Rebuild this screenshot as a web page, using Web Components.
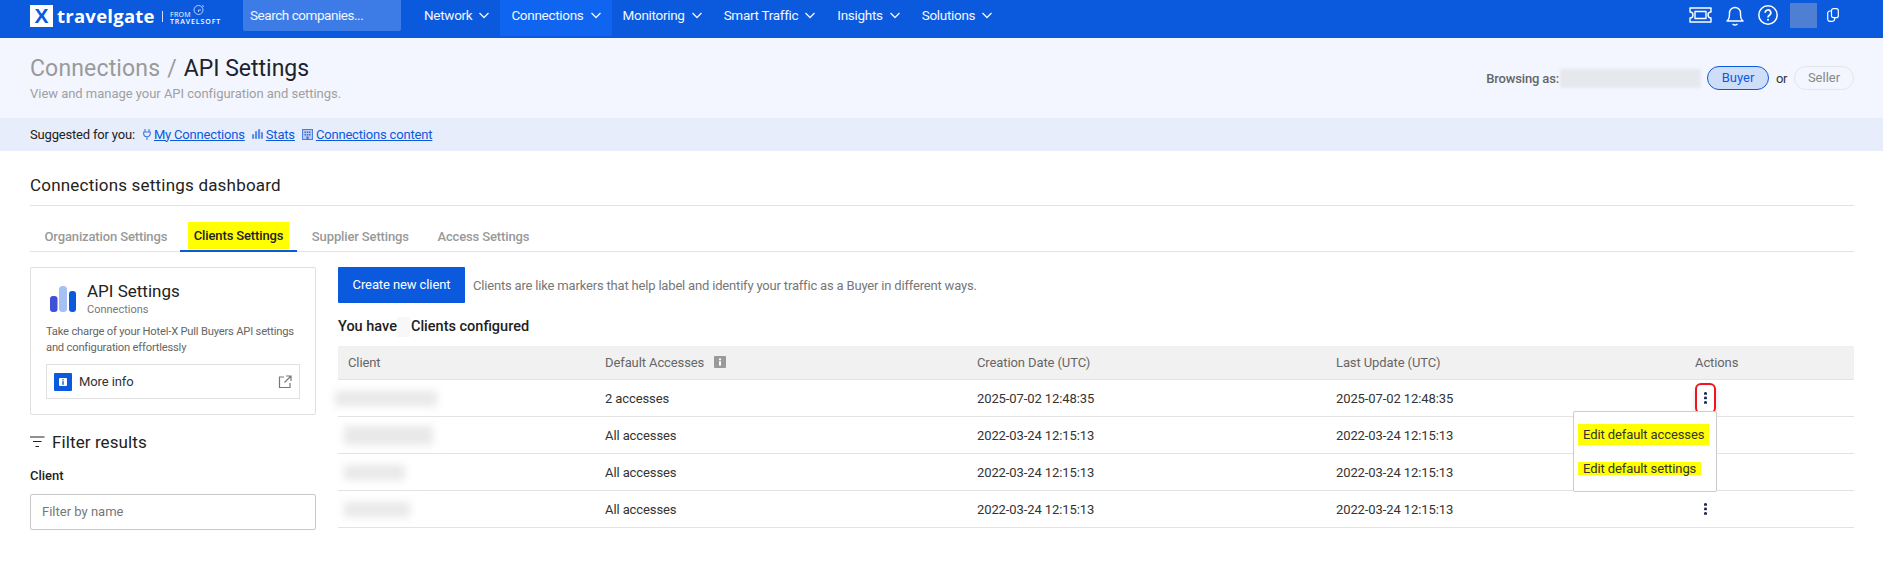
<!DOCTYPE html>
<html><head><meta charset="utf-8">
<style>
html,body{margin:0;padding:0;background:#fff;height:567px;overflow:hidden}
body{font-family:Roboto,"Liberation Sans",sans-serif;color:#1f2329}
</style></head><body>
<tg-nav></tg-nav>
<tg-header></tg-header>
<tg-suggest></tg-suggest>
<tg-main></tg-main>
<script>
const chev='<svg width="10" height="10" viewBox="0 0 10 10" fill="none" stroke="currentColor" stroke-width="1.3"><path d="M.5 3 5 7.500 9.500 3"/></svg>';
function def(name,css,html){
  customElements.define(name,class extends HTMLElement{
    constructor(){super();const s=this.attachShadow({mode:'open'});s.innerHTML='<style>'+css+'</style>'+html;}
  });
}
def('tg-nav',`
:host{display:flex;align-items:flex-start;height:38px;background:#0b5ade;color:#f2f6ff;font-size:13.5px;letter-spacing:-.3px}
.logo{display:flex;align-items:center;margin:5px 0 0 30px;width:213px;height:22px;flex:none;color:#fff;letter-spacing:0}
.x{width:23px;height:22px;background:#fff;color:#0b5ade;font:700 21px/22px "Liberation Sans",sans-serif;text-align:center;flex:none}
.name{font:700 18.5px/22px "Open Sans",sans-serif;margin-left:4px;letter-spacing:.25px;width:101px;flex:none}
.sep{width:1px;height:11px;background:#cfe0ff;margin:0 7px 0 4px}
.from{font:400 7px/7px "Open Sans",sans-serif;margin-top:3px;position:relative;letter-spacing:.3px}
.from b{display:block;font-weight:600;font-size:7px;letter-spacing:.9px}
.from svg{position:absolute;left:23px;top:-7px}
.search{width:158px;height:31px;background:#3d7ce6;border-radius:0 0 2px 2px;box-sizing:border-box;padding-left:7px;line-height:31px;flex:none;margin-right:12px;letter-spacing:-.45px}
nav{display:flex}
.i{display:flex;gap:7px;align-items:center;height:36px;padding:0 11px 7px;box-sizing:border-box}
.i.on{background:#0f65f0}
.right{margin-left:auto;display:flex;align-items:center;height:30px;padding-right:44px;color:#fff}
.av{width:27px;height:25px;background:#4e7fd2;margin:0 10px 0 12px;filter:blur(.6px)}
.right svg{display:block}
`,`
<div class="logo"><span class="x">X</span><span class="name">travelgate</span><span class="sep"></span><span class="from">FROM<svg width="12" height="11" viewBox="0 0 12 11" fill="none" stroke="#dfe9ff" stroke-width=".8"><circle cx="5.500" cy="6" r="4.500"/><path d="M8 6H5.500v2M9 1.500l2 1"/></svg><b>TRAVELSOFT</b></span></div>
<div class="search">Search companies...</div>
<nav>
<div class="i">Network ${chev}</div><div class="i on">Connections ${chev}</div><div class="i">Monitoring ${chev}</div><div class="i">Smart Traffic ${chev}</div><div class="i">Insights ${chev}</div><div class="i">Solutions ${chev}</div>
</nav>
<div class="right">
<svg width="23" height="16" viewBox="0 0 23 16" fill="none" stroke="currentColor" stroke-width="1.4" stroke-linejoin="round"><path d="M1 1h21v4a3 3 0 0 0 0 6v4H1v-4a3 3 0 0 0 0-6z"/><rect x="6" y="4.500" width="11" height="7"/></svg>
<svg style="margin-left:14px" width="18" height="21" viewBox="0 0 18 21" fill="none" stroke="currentColor" stroke-width="1.4" stroke-linecap="round" stroke-linejoin="round"><path d="M1 16c2-2 2.500-3 2.500-8a5.500 5.500 0 0 1 11 0c0 5 .5 6 2.500 8z"/><path d="M7 19.300q2 1.300 4 0"/></svg>
<svg style="margin-left:14px" width="20" height="20" viewBox="0 0 20 20" fill="none" stroke="currentColor" stroke-width="1.5"><circle cx="10" cy="10" r="9.200"/><path d="M7.200 7.800a2.800 2.800 0 1 1 4.200 2.400c-1 .6-1.400 1-1.400 2.200" stroke-width="1.700"/><circle cx="10" cy="14.700" r="1" fill="currentColor" stroke="none"/></svg>
<div class="av"></div>
<svg width="12" height="14" viewBox="0 0 12 14" fill="none" stroke="currentColor" stroke-width="1.200"><rect x="4.500" y=".7" width="6.800" height="9" rx="2"/><path d="M4.500 3H3a2.200 2.200 0 0 0-2.300 2.200v5.900A2.200 2.200 0 0 0 3 13.300h2.500a2.200 2.200 0 0 0 2.200-2.200v-1.400"/></svg>
</div>`);
def('tg-header',`
:host{display:flex;height:80px;background:#f3f6ff;box-sizing:border-box;padding:17px 0 0 30px;justify-content:space-between}
h1{margin:0;font-weight:400;font-size:23px;line-height:28px;color:#1f2329}
h1 span{color:#9a9a9a;letter-spacing:.15px}
h1 span.s{margin:0 7px;letter-spacing:0}
p{margin:3px 0 0;font-size:13px;line-height:16px;color:#a0a0a0;letter-spacing:-.03px}
.r{display:flex;align-items:center;height:24px;margin-top:11px;padding-right:29px;font-size:13px;color:#333}
.l{font-weight:500;color:#666;letter-spacing:-.15px;margin-right:1px}
.blur{width:141px;height:19px;background:#e6e8ee;filter:blur(1.5px);margin:0 6px 0 0}
.or{width:11px;letter-spacing:-.3px}
.pill{height:24px;box-sizing:border-box;border-radius:12px;line-height:22px;text-align:center}
.b{width:62px;border:1px solid #0b5ade;background:#cfdef8;color:#0b5ade;margin-right:7px}
.s2{width:60px;border:1px solid #e3e5ea;color:#888;margin-left:7px}
`,`
<div><h1><span>Connections</span><span class="s">/</span>API Settings</h1><p>View and manage your API configuration and settings.</p></div>
<div class="r"><span class="l">Browsing as:</span><span class="blur"></span><span class="pill b">Buyer</span><span class="or">or</span><span class="pill s2">Seller</span></div>`);
def('tg-suggest',`
:host{display:flex;align-items:center;height:33px;box-sizing:border-box;padding:0 0 1px 30px;background:#e7edfb;font-size:13px;color:#222;letter-spacing:-.18px}
a{color:#0b5ade;text-decoration:underline}
svg{flex:none;display:block}
.g{display:flex;align-items:center;gap:3px;margin-left:7px}
`,`
<span>Suggested for you:</span>
<span class="g" style="margin-left:8px"><svg width="8" height="11" viewBox="0 0 8 11" fill="none" stroke="#3f78dc" stroke-width="1.100"><path d="M2 0v3M6 0v3M.7 3h6.600v1.500a3.300 3.300 0 0 1-6.600 0zM4 8v3"/></svg><a>My Connections</a></span>
<span class="g"><svg width="11" height="10" viewBox="0 0 11 10" fill="#5b8ee8"><rect x="0" y="5" width="2.200" height="5" rx="1"/><rect x="3" y="2" width="2.200" height="8" rx="1"/><rect x="6" y="0" width="2.200" height="10" rx="1"/><rect x="9" y="3" width="2" height="7" rx="1"/></svg><a>Stats</a></span>
<span class="g"><svg width="11" height="11" viewBox="0 0 11 11"><rect x=".5" y=".5" width="10" height="10" fill="#b7cbf4" stroke="#4a7fdf"/><path d="M2.500 2.500h1.500v1.500H2.500zM4.800 2.500h1.500v1.500H4.800zM7 2.500h1.500v1.500H7zM2.500 5h1.500v1.500H2.500zM4.800 5h1.500v1.500H4.800zM7 5h1.500v1.500H7zM4.500 7.500h2v3h-2z" fill="#3f6fd0"/></svg><a>Connections content</a></span>`);
def('tg-main',`
:host{display:block;padding:24px 29px 0 30px}
h2{margin:0;font-weight:400;font-size:17px;line-height:20px;height:30px;border-bottom:1px solid #e3e3e3;color:#222;letter-spacing:.2px}
`,`<h2>Connections settings dashboard</h2><tg-tabs></tg-tabs><tg-body></tg-body>`);
def('tg-tabs',`
:host{display:flex;height:45px;border-bottom:1px solid #e3e3e3;font-size:13px;font-weight:500;color:#999;margin-bottom:15px;letter-spacing:-.13px}
.t{padding:14px 14px 0 14.5px;display:flex;align-items:center;height:46px;box-sizing:border-box}
.on{color:#222;border-bottom:2px solid #0b5ade;padding:15px 8px 0 7.5px;margin-left:-1px}
.on span{background:#ff0;padding:5.5px 6px;display:block;line-height:16px}
`,`<div class="t">Organization Settings</div><div class="t on"><span>Clients Settings</span></div><div class="t">Supplier Settings</div><div class="t">Access Settings</div>`);
def('tg-body',`
:host{display:grid;grid-template-columns:286px 1fr;column-gap:22px;align-items:start}
`,`<tg-side></tg-side><tg-content></tg-content>`);
def('tg-side',`
:host{display:block}
.card{border:1px solid #e0e0e0;border-radius:2px;height:148px;box-sizing:border-box;padding:13px 15px 0}
.top{display:flex;gap:11px;height:43px;padding-left:4px}
.top svg{margin-top:5px;flex:none}
.top b{display:block;font-weight:400;font-size:17px;line-height:20px;color:#222}
.top small{display:block;font-size:11px;line-height:15px;color:#777;margin-top:.5px}
.d{font-size:11.2px;line-height:16px;color:#666;letter-spacing:-.2px}
.more{display:flex;align-items:center;height:35px;box-sizing:border-box;border:1px solid #e0e0e0;margin-top:8px;padding:0 7px;font-size:13px;color:#333;gap:7px;letter-spacing:-.1px}
.ic{width:18px;height:18px;background:#0b5ade;border-radius:1px;display:flex;align-items:center;justify-content:center}
.more>svg{margin-left:auto}
.f{display:flex;align-items:center;gap:7px;margin-top:17px;font-size:17px;line-height:20px;color:#222;letter-spacing:.1px}
label{display:block;font-size:13px;font-weight:500;margin-top:15px;line-height:18px;color:#222}
.in{height:36px;box-sizing:border-box;border:1px solid #c8c8c8;border-radius:2px;margin-top:9px;padding:0 11px;line-height:34px;font-size:13px;color:#777}
`,`
<div class="card">
<div class="top"><svg width="26" height="26" viewBox="0 0 26 26"><rect x="0" y="10" width="7.500" height="16" rx="3" fill="#3f50d8"/><rect x="9" y="0" width="8" height="26" rx="3.500" fill="#a5c0f2"/><rect x="19" y="5" width="7" height="21" rx="3" fill="#0b5ade"/></svg><div><b>API Settings</b><small>Connections</small></div></div>
<div class="d">Take charge of your Hotel-X Pull Buyers API settings and configuration effortlessly</div>
<div class="more"><span class="ic"><svg width="8" height="8" viewBox="0 0 8 8"><rect width="8" height="8" rx="1" fill="#fff"/><rect x="3.300" y="1.200" width="1.400" height="1.200" fill="#0b5ade"/><rect x="3.300" y="3.200" width="1.400" height="3.600" fill="#0b5ade"/></svg></span><span>More info</span>
<svg width="14" height="14" viewBox="0 0 14 14" fill="none" stroke="#777" stroke-width="1.200"><path d="M6 2H1.500v10.500H12V8M8 1h5v5M13 1 6.500 7.500"/></svg></div>
</div>
<div class="f"><svg width="15" height="12" viewBox="0 0 15 12" fill="none" stroke="#222" stroke-width="1.200"><path d="M0 1h14.500M3 5.500h8.500M5.500 10.500h3.500"/></svg>Filter results</div>
<label>Client</label>
<div class="in">Filter by name</div>`);
def('tg-content',`
:host{display:block;position:relative}
.top{display:flex;align-items:center;gap:8px;font-size:13px;color:#777;letter-spacing:-.18px}
.btn{width:127px;height:36px;background:#0b5ade;color:#fff;border-radius:1px;text-align:center;line-height:36px;font-size:13px;flex:none;letter-spacing:-.1px}
.cnt{font-size:14.5px;font-weight:500;line-height:18px;margin:14px 0 9px;color:#222;display:flex;align-items:center;gap:.5px}
.cnt i{display:block;width:13px;height:20px;background:#f8f8f8}
table{width:100%;border-collapse:collapse;font-size:13px;table-layout:fixed;letter-spacing:-.1px}
th{background:#f1f1f1;height:33px;font-weight:400;color:#666;text-align:left;padding:0 0 0 10px;border-bottom:1px solid #e3e3e3}
td{height:36px;padding:0 0 0 10px;color:#333;border-bottom:1px solid #e3e3e3}
.bl{display:block;height:15px;background:#e8e8e8;filter:blur(4px)}
.c{padding-left:0}
.dots{display:flex;align-items:center;width:21px;height:31px;margin-left:10px;box-sizing:border-box}
.k{width:3px;height:12px;display:block;margin:0 auto;background:radial-gradient(circle at 50% 1.5px,#1e2c55 1.4px,transparent 1.5px) 0 0/3px 4.5px}
.mark{border:2px solid #f0141e;border-radius:6px;box-shadow:0 3px 6px rgba(0,0,0,.12)}
.menu{position:absolute;right:137.5px;top:144px;width:143.5px;height:81px;box-sizing:border-box;background:#fff;border:1px solid #ccc;border-radius:2px;font-size:13px;color:#333;padding:12px 4px 0;z-index:3;letter-spacing:-.1px}
.menu span{display:block;background:#ff0;width:max-content;padding:0 5px;line-height:21px}
.menu span+span{margin-top:17px;line-height:13px}
`,`
<div class="top"><div class="btn">Create new client</div><span>Clients are like markers that help label and identify your traffic as a Buyer in different ways.</span></div>
<div class="cnt"><span>You have</span><i></i><span>Clients configured</span></div>
<table>
<colgroup><col style="width:257px"><col style="width:372px"><col style="width:359px"><col style="width:359px"><col></colgroup>
<tr><th>Client</th><th>Default Accesses <svg width="12" height="12" viewBox="0 0 12 12" style="vertical-align:-1px;margin-left:7px"><rect width="12" height="12" rx="1" fill="#9a9a9a"/><rect x="5" y="2.500" width="2" height="1.800" fill="#fff"/><rect x="5" y="5.300" width="2" height="4.300" fill="#fff"/></svg></th><th>Creation Date (UTC)</th><th>Last Update (UTC)</th><th>Actions</th></tr>
<tr><td style="padding-left:0"><span class="bl" style="width:102px;margin-left:-3px"></span></td><td>2 accesses</td><td>2025-07-02 12:48:35</td><td>2025-07-02 12:48:35</td><td class="c"><span class="dots mark"><i class="k"></i></span></td></tr>
<tr><td><span class="bl" style="width:89px;margin-left:-4px;height:19px"></span></td><td>All accesses</td><td>2022-03-24 12:15:13</td><td>2022-03-24 12:15:13</td><td class="c"></td></tr>
<tr><td><span class="bl" style="width:61px;margin-left:-4px"></span></td><td>All accesses</td><td>2022-03-24 12:15:13</td><td>2022-03-24 12:15:13</td><td class="c"></td></tr>
<tr><td><span class="bl" style="width:66px;margin-left:-4px"></span></td><td>All accesses</td><td>2022-03-24 12:15:13</td><td>2022-03-24 12:15:13</td><td class="c"><span class="dots"><i class="k"></i></span></td></tr>
</table>
<div class="menu"><span>Edit default accesses</span><span>Edit default settings</span></div>`);
</script>
</body></html>
